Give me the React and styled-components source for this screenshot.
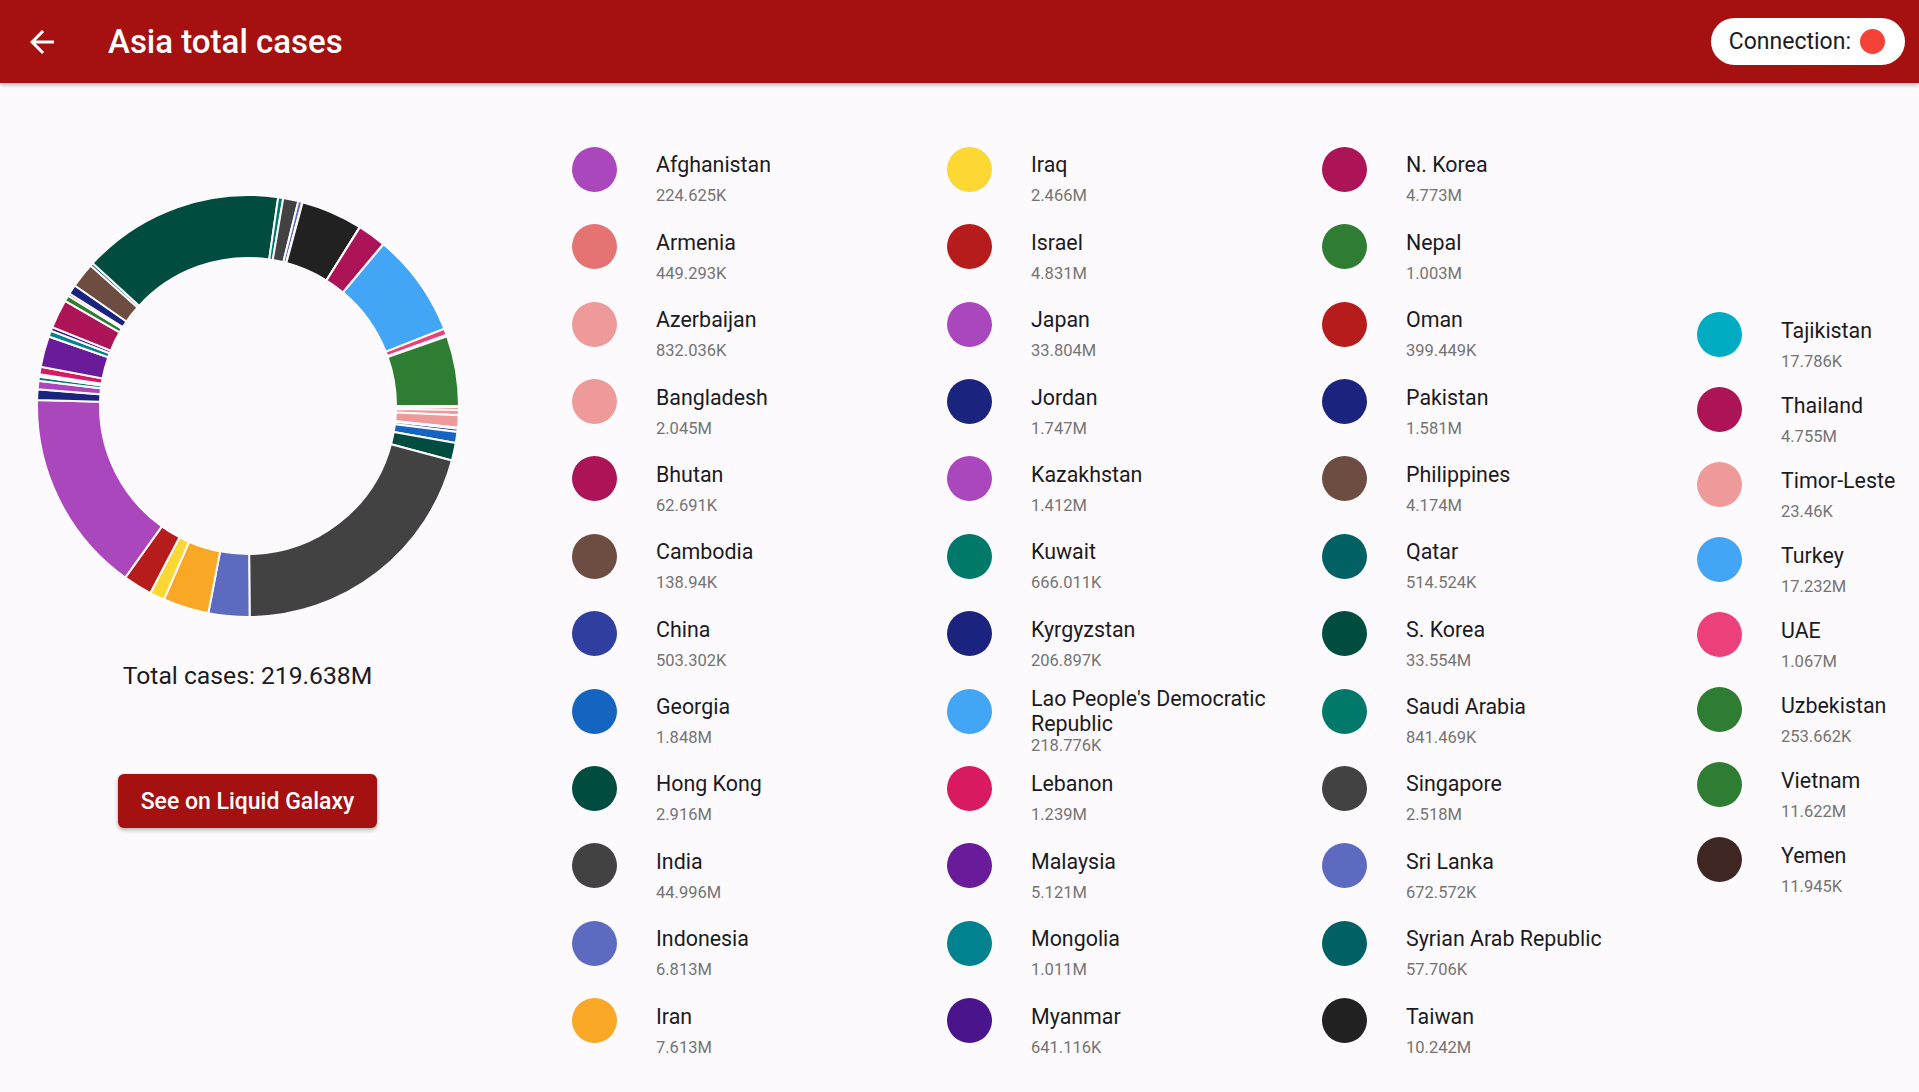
import React from 'react';
import styled, { createGlobalStyle } from 'styled-components';

const BG = '#fcfafc';
const BRAND = '#a51010';

const GlobalStyle = createGlobalStyle`
  html, body {
    margin: 0;
    padding: 0;
    background: ${BG};
  }
  body {
    font-family: Roboto, "Noto Sans", sans-serif;
  }
`;

const countries = [
  { name: 'Afghanistan', value: 224625, label: '224.625K', color: '#ab47bc' },
  { name: 'Armenia', value: 449293, label: '449.293K', color: '#e57373' },
  { name: 'Azerbaijan', value: 832036, label: '832.036K', color: '#ef9a9a' },
  { name: 'Bangladesh', value: 2045000, label: '2.045M', color: '#ef9a9a' },
  { name: 'Bhutan', value: 62691, label: '62.691K', color: '#ad1457' },
  { name: 'Cambodia', value: 138940, label: '138.94K', color: '#6d4c41' },
  { name: 'China', value: 503302, label: '503.302K', color: '#303f9f' },
  { name: 'Georgia', value: 1848000, label: '1.848M', color: '#1565c0' },
  { name: 'Hong Kong', value: 2916000, label: '2.916M', color: '#004d40' },
  { name: 'India', value: 44996000, label: '44.996M', color: '#424242' },
  { name: 'Indonesia', value: 6813000, label: '6.813M', color: '#5c6bc0' },
  { name: 'Iran', value: 7613000, label: '7.613M', color: '#f9a825' },
  { name: 'Iraq', value: 2466000, label: '2.466M', color: '#fdd835' },
  { name: 'Israel', value: 4831000, label: '4.831M', color: '#b71c1c' },
  { name: 'Japan', value: 33804000, label: '33.804M', color: '#ab47bc' },
  { name: 'Jordan', value: 1747000, label: '1.747M', color: '#1a237e' },
  { name: 'Kazakhstan', value: 1412000, label: '1.412M', color: '#ab47bc' },
  { name: 'Kuwait', value: 666011, label: '666.011K', color: '#00796b' },
  { name: 'Kyrgyzstan', value: 206897, label: '206.897K', color: '#1a237e' },
  { name: "Lao People's Democratic Republic", value: 218776, label: '218.776K', color: '#42a5f5' },
  { name: 'Lebanon', value: 1239000, label: '1.239M', color: '#d81b60' },
  { name: 'Malaysia', value: 5121000, label: '5.121M', color: '#6a1b9a' },
  { name: 'Mongolia', value: 1011000, label: '1.011M', color: '#00838f' },
  { name: 'Myanmar', value: 641116, label: '641.116K', color: '#4a148c' },
  { name: 'N. Korea', value: 4773000, label: '4.773M', color: '#ad1457' },
  { name: 'Nepal', value: 1003000, label: '1.003M', color: '#2e7d32' },
  { name: 'Oman', value: 399449, label: '399.449K', color: '#b71c1c' },
  { name: 'Pakistan', value: 1581000, label: '1.581M', color: '#1a237e' },
  { name: 'Philippines', value: 4174000, label: '4.174M', color: '#6d4c41' },
  { name: 'Qatar', value: 514524, label: '514.524K', color: '#006064' },
  { name: 'S. Korea', value: 33554000, label: '33.554M', color: '#004d40' },
  { name: 'Saudi Arabia', value: 841469, label: '841.469K', color: '#00796b' },
  { name: 'Singapore', value: 2518000, label: '2.518M', color: '#424242' },
  { name: 'Sri Lanka', value: 672572, label: '672.572K', color: '#5c6bc0' },
  { name: 'Syrian Arab Republic', value: 57706, label: '57.706K', color: '#006064' },
  { name: 'Taiwan', value: 10242000, label: '10.242M', color: '#212121' },
  { name: 'Tajikistan', value: 17786, label: '17.786K', color: '#00acc1' },
  { name: 'Thailand', value: 4755000, label: '4.755M', color: '#ad1457' },
  { name: 'Timor-Leste', value: 23460, label: '23.46K', color: '#ef9a9a' },
  { name: 'Turkey', value: 17232000, label: '17.232M', color: '#42a5f5' },
  { name: 'UAE', value: 1067000, label: '1.067M', color: '#ec407a' },
  { name: 'Uzbekistan', value: 253662, label: '253.662K', color: '#2e7d32' },
  { name: 'Vietnam', value: 11622000, label: '11.622M', color: '#2e7d32' },
  { name: 'Yemen', value: 11945, label: '11.945K', color: '#3e2723' },
];

const Page = styled.div`
  width: 1919px;
  height: 1092px;
  overflow: hidden;
  display: flex;
  flex-direction: column;
  background: ${BG};
`;

const AppBar = styled.header`
  position: relative;
  z-index: 1;
  height: 83px;
  flex-shrink: 0;
  display: flex;
  align-items: center;
  background: ${BRAND};
  box-shadow: 0 2px 4px rgba(0, 0, 0, 0.28);
`;

const BackButton = styled.button`
  width: 84px;
  height: 83px;
  padding: 0;
  border: none;
  background: transparent;
  display: flex;
  align-items: center;
  justify-content: center;
  cursor: pointer;
`;

const Title = styled.h1`
  margin: 0 0 0 24px;
  flex: 1;
  font-size: 33px;
  font-weight: 500;
  color: #fff;
  letter-spacing: 0;
`;

const ConnectionPill = styled.div`
  height: 47px;
  margin-right: 14px;
  padding: 0 20px 0 18px;
  border-radius: 24px;
  background: #fff;
  display: flex;
  align-items: center;
  gap: 9px;
  font-size: 23px;
  color: #1c1b1f;
`;

const StatusDot = styled.span`
  width: 25px;
  height: 25px;
  border-radius: 50%;
  background: ${(p) => (p.$online ? '#43a047' : '#f44336')};
`;

const Main = styled.main`
  flex: 1;
  display: flex;
`;

const ChartPanel = styled.section`
  width: 495px;
  flex-shrink: 0;
  display: flex;
  flex-direction: column;
  align-items: center;
  padding-top: 111px;
`;

const TotalText = styled.div`
  margin-top: 44px;
  font-size: 24.7px;
  line-height: 28px;
  color: #1c1b1f;
`;

const GalaxyButton = styled.button`
  margin-top: 84px;
  width: 259px;
  height: 54px;
  border: none;
  border-radius: 6px;
  background: ${BRAND};
  color: #fff;
  font-family: Roboto, "Noto Sans", sans-serif;
  font-size: 23px;
  font-weight: 500;
  box-shadow: 0 2px 4px rgba(0, 0, 0, 0.3);
  cursor: pointer;
`;

const Legend = styled.section`
  flex: 1;
  margin-left: 65px;
  padding-top: 57.6px;
  height: 928.8px;
  display: grid;
  grid-template-columns: 375px 375px 375px 1fr;
`;

const LegendColumn = styled.div`
  display: flex;
  flex-direction: column;
  justify-content: center;
  padding-top: ${(p) => p.$shift || 0}px;
`;

const LegendItem = styled.div`
  height: ${(p) => p.$rowHeight}px;
  display: flex;
  align-items: center;
`;

const Swatch = styled.span`
  flex-shrink: 0;
  width: 45px;
  height: 45px;
  margin: 0 39px 20px 12px;
  border-radius: 50%;
  background: ${(p) => p.$color};
`;

const ItemText = styled.div`
  width: 279px;
`;

const ItemName = styled.div`
  font-size: 21.4px;
  line-height: 25px;
  color: #1c1b1f;
`;

const ItemValue = styled.div`
  margin-top: ${(p) => (p.$tight ? 0.5 : 9)}px;
  font-size: 16.5px;
  line-height: 20px;
  color: #747474;
`;

const ArrowBack = () => (
  <svg width="36" height="36" viewBox="0 0 24 24" fill="#fff">
    <path d="M20 11H7.83l5.59-5.59L12 4l-8 8 8 8 1.41-1.41L7.83 13H20v-2z" />
  </svg>
);

const Donut = ({ items, size = 424, outer = 211, inner = 148 }) => {
  const total = items.reduce((sum, item) => sum + item.value, 0);
  const c = size / 2;
  const pt = (r, a) => `${(c + r * Math.cos(a)).toFixed(2)} ${(c + r * Math.sin(a)).toFixed(2)}`;
  let angle = 0;
  return (
    <svg width={size} height={size} viewBox={`0 0 ${size} ${size}`}>
      {items.map((item) => {
        const sweep = (item.value / total) * Math.PI * 2;
        const a0 = angle;
        const a1 = angle + sweep;
        angle = a1;
        const large = sweep > Math.PI ? 1 : 0;
        const d = `M ${pt(outer, a0)} A ${outer} ${outer} 0 ${large} 1 ${pt(outer, a1)} L ${pt(inner, a1)} A ${inner} ${inner} 0 ${large} 0 ${pt(inner, a0)} Z`;
        return <path key={item.name} d={d} fill={item.color} stroke={BG} strokeWidth="2" strokeLinejoin="miter" />;
      })}
    </svg>
  );
};

const columns = [
  { items: countries.slice(0, 12), rowHeight: 77.4, shift: 0 },
  { items: countries.slice(12, 24), rowHeight: 77.4, shift: 0 },
  { items: countries.slice(24, 36), rowHeight: 77.4, shift: 0 },
  { items: countries.slice(36), rowHeight: 75, shift: 5 },
];

export default function App() {
  return (
    <Page>
      <GlobalStyle />
      <AppBar>
        <BackButton aria-label="Back">
          <ArrowBack />
        </BackButton>
        <Title>Asia total cases</Title>
        <ConnectionPill>
          Connection:
          <StatusDot $online={false} />
        </ConnectionPill>
      </AppBar>
      <Main>
        <ChartPanel>
          <Donut items={countries} />
          <TotalText>Total cases: 219.638M</TotalText>
          <GalaxyButton>See on Liquid Galaxy</GalaxyButton>
        </ChartPanel>
        <Legend>
          {columns.map((col, i) => (
            <LegendColumn key={i} $shift={col.shift}>
              {col.items.map((item) => (
                <LegendItem key={item.name} $rowHeight={col.rowHeight}>
                  <Swatch $color={item.color} />
                  <ItemText>
                    <ItemName>{item.name}</ItemName>
                    <ItemValue $tight={item.name.length > 28}>{item.label}</ItemValue>
                  </ItemText>
                </LegendItem>
              ))}
            </LegendColumn>
          ))}
        </Legend>
      </Main>
    </Page>
  );
}
